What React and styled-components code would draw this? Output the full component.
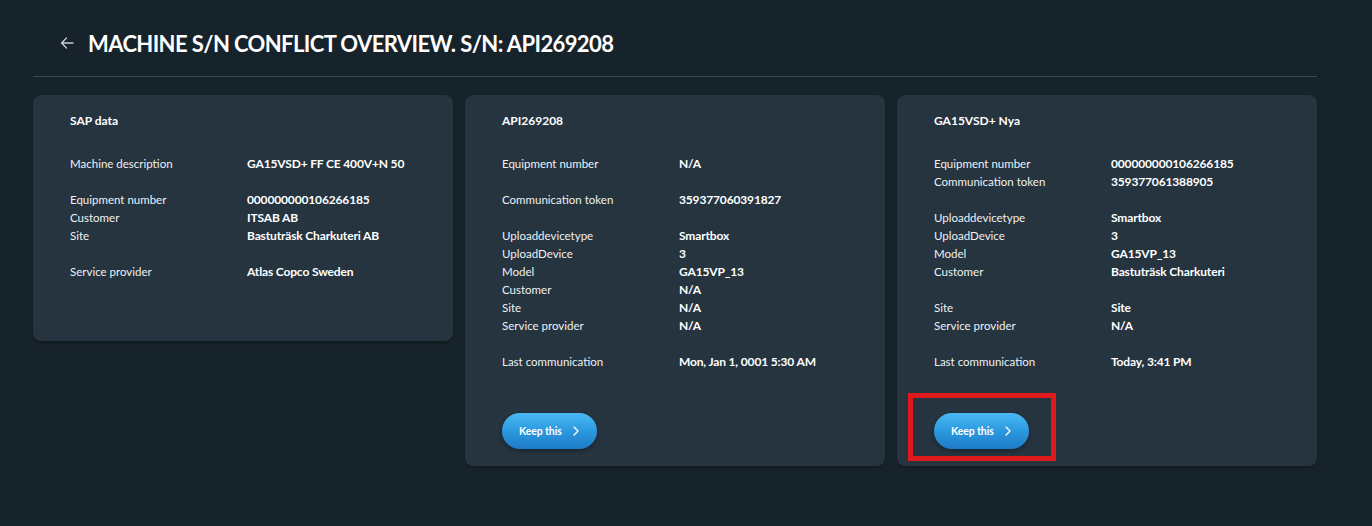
import styled, { createGlobalStyle } from "styled-components";

const GlobalStyle = createGlobalStyle`
  html, body {
    margin: 0;
    background: #17232b;
  }
  body {
    font-family: Lato, "Liberation Sans", sans-serif;
    color: #ffffff;
  }
`;

const Page = styled.div`
  padding: 0 55px 0 33px;
  min-height: 526px;
  box-sizing: border-box;
`;

const Header = styled.div`
  display: flex;
  align-items: center;
  gap: 14px;
  height: 77px;
  padding: 10px 0 0 27px;
  border-bottom: 1px solid #3d4a53;
  box-sizing: border-box;
`;

const BackButton = styled.button`
  display: flex;
  align-items: center;
  background: none;
  border: none;
  padding: 0;
  color: #c9d0d5;
  cursor: pointer;
`;

const Title = styled.h1`
  margin: 0;
  font-size: 22px;
  font-weight: 700;
  letter-spacing: -0.6px;
  color: #ffffff;
`;

const Cards = styled.div`
  display: grid;
  grid-template-columns: repeat(3, 420px);
  gap: 12px;
  align-items: start;
  margin-top: 18px;
`;

const Card = styled.div`
  background: #25343f;
  border-radius: 8px;
  padding: 17px 36px ${(p) => p.$pb || 17}px 37px;
  box-shadow: 0 2px 3px rgba(0, 0, 0, 0.25);
`;

const CardTitle = styled.div`
  font-size: 12px;
  font-weight: 700;
  line-height: 18px;
  margin-bottom: 25px;
`;

const Group = styled.div`
  margin-bottom: ${(p) => (p.$last ? 0 : 18)}px;
`;

const Row = styled.div`
  display: grid;
  grid-template-columns: 177px 1fr;
  line-height: 18px;
`;

const Label = styled.span`
  font-size: 11.5px;
  color: #eef1f3;
`;

const Value = styled.span`
  font-size: 12px;
  font-weight: 700;
  letter-spacing: -0.15px;
`;

const Actions = styled.div`
  margin-top: 42px;
  position: relative;
  display: inline-block;
`;

const KeepButton = styled.button`
  display: flex;
  align-items: center;
  gap: 11px;
  width: 95px;
  height: 36px;
  padding: 0 0 0 17px;
  border: none;
  border-radius: 18px;
  background: linear-gradient(180deg, #48b9f4 0%, #2a95dc 55%, #1d7cc7 100%);
  color: #ffffff;
  font-family: inherit;
  font-size: 10.5px;
  font-weight: 700;
  letter-spacing: -0.1px;
  box-shadow: 0 2px 4px rgba(0, 0, 0, 0.3);
  cursor: pointer;
`;

const Highlight = styled.div`
  position: absolute;
  left: -26px;
  top: -20px;
  width: 148px;
  height: 68px;
  border: 5px solid #e0191c;
  box-sizing: border-box;
  pointer-events: none;
`;

const cards = [
  {
    title: "SAP data",
    pb: 60,
    groups: [
      [["Machine description", "GA15VSD+ FF CE 400V+N 50"]],
      [
        ["Equipment number", "000000000106266185"],
        ["Customer", "ITSAB AB"],
        ["Site", "Bastuträsk Charkuteri AB"],
      ],
      [["Service provider", "Atlas Copco Sweden"]],
    ],
  },
  {
    title: "API269208",
    keep: true,
    groups: [
      [["Equipment number", "N/A"]],
      [["Communication token", "359377060391827"]],
      [
        ["Uploaddevicetype", "Smartbox"],
        ["UploadDevice", "3"],
        ["Model", "GA15VP_13"],
        ["Customer", "N/A"],
        ["Site", "N/A"],
        ["Service provider", "N/A"],
      ],
      [["Last communication", "Mon, Jan 1, 0001 5:30 AM"]],
    ],
  },
  {
    title: "GA15VSD+ Nya",
    keep: true,
    highlight: true,
    groups: [
      [
        ["Equipment number", "000000000106266185"],
        ["Communication token", "359377061388905"],
      ],
      [
        ["Uploaddevicetype", "Smartbox"],
        ["UploadDevice", "3"],
        ["Model", "GA15VP_13"],
        ["Customer", "Bastuträsk Charkuteri"],
      ],
      [
        ["Site", "Site"],
        ["Service provider", "N/A"],
      ],
      [["Last communication", "Today, 3:41 PM"]],
    ],
  },
];

function ArrowLeft() {
  return (
    <svg width="14" height="14" viewBox="0 0 14 14" fill="none">
      <path
        d="M13 7H1.5M6.5 2L1.5 7l5 5"
        stroke="currentColor"
        strokeWidth="1.3"
        strokeLinecap="round"
        strokeLinejoin="round"
      />
    </svg>
  );
}

function Chevron() {
  return (
    <svg width="6" height="10" viewBox="0 0 6 10" fill="none">
      <path
        d="M1 1l4 4-4 4"
        stroke="currentColor"
        strokeWidth="1.3"
        strokeLinecap="round"
        strokeLinejoin="round"
      />
    </svg>
  );
}

export default function App() {
  return (
    <>
      <GlobalStyle />
      <Page>
        <Header>
          <BackButton aria-label="Back">
            <ArrowLeft />
          </BackButton>
          <Title>MACHINE S/N CONFLICT OVERVIEW. S/N: API269208</Title>
        </Header>
        <Cards>
          {cards.map((card) => (
            <Card key={card.title} $pb={card.pb}>
              <CardTitle>{card.title}</CardTitle>
              {card.groups.map((group, gi) => (
                <Group key={gi} $last={gi === card.groups.length - 1}>
                  {group.map(([label, value]) => (
                    <Row key={label}>
                      <Label>{label}</Label>
                      <Value>{value}</Value>
                    </Row>
                  ))}
                </Group>
              ))}
              {card.keep && (
                <Actions>
                  <KeepButton>
                    Keep this
                    <Chevron />
                  </KeepButton>
                  {card.highlight && <Highlight />}
                </Actions>
              )}
            </Card>
          ))}
        </Cards>
      </Page>
    </>
  );
}
